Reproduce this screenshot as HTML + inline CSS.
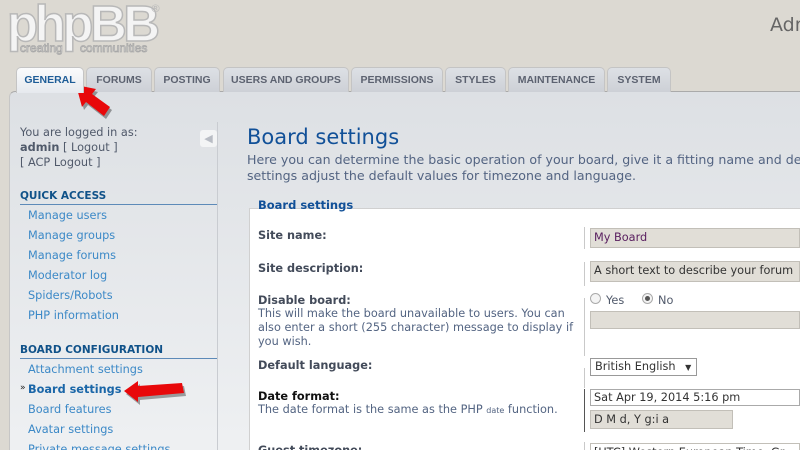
<!DOCTYPE html>
<html><head><meta charset="utf-8"><style>
*{margin:0;padding:0;box-sizing:border-box}
html,body{width:800px;height:450px;overflow:hidden}
body{background:#dcd9d2;font-family:"DejaVu Sans","Liberation Sans",sans-serif;position:relative}
.abs{position:absolute;white-space:nowrap}
.logo{left:7px;top:-6px;font:bold 51px "Liberation Sans",sans-serif;color:#f4f4f4;-webkit-text-stroke:1.5px #b8b8b8;letter-spacing:-3.5px}
.tag{left:20px;top:41px;font:12px "Liberation Sans",sans-serif;color:#f4f4f4;-webkit-text-stroke:0.8px #a8a8a8;word-spacing:14px}
.tab{position:absolute;top:67px;height:25px;background:linear-gradient(#dde0e5,#cdd0d6);border:1px solid #c4c4c4;border-bottom:none;border-radius:5px 5px 0 0;font:bold 10.5px "Liberation Sans",sans-serif;color:#5c6270;text-align:center;line-height:24px}
.tab.act{background:linear-gradient(#fafbfc,#e6e9ee);color:#1d5c97;height:26px;z-index:2}
.panel{position:absolute;left:9px;top:91px;width:791px;height:359px;background:linear-gradient(#dde0e4,#eef0f2 350px);border-top:1px solid #aaa;border-left:1px solid #c6c6c6;border-radius:6px 0 0 0}
.side{position:absolute;left:9px;top:122px;width:209px;height:328px;border-right:1px solid #c9ccd1}
.t{font-size:11.3px;color:#50596a}
.hd{font:bold 10.5px "DejaVu Sans",sans-serif;color:#105289;border-bottom:1px solid #5d8ab8;width:197px;padding-bottom:2px}
.lk{font-size:11.3px;color:#3c89c7;left:28px}
.lbl{font-weight:bold;font-size:11.3px;color:#434b5a;left:258px}
.inp{position:absolute;background:#e1ded7;border:1px solid #c2bfb8;font-size:11.3px;color:#333;padding-left:3px;line-height:17px;overflow:hidden;white-space:nowrap}
.vl{position:absolute;left:584px;width:1px;background:#c9c9c9}
</style></head><body>
<div class="abs logo">phpBB</div>
<div class="abs" style="left:150px;top:2px;font-size:11px;color:#bbb">®</div>
<div class="abs tag">creating communities</div>
<div class="abs" style="left:770px;top:14px;font:19px 'DejaVu Sans',sans-serif;color:#666">Adm</div>

<div class="panel"></div>
<div class="tab act" style="left:16px;width:68px">GENERAL</div>
<div class="tab" style="left:86px;width:66px">FORUMS</div>
<div class="tab" style="left:154px;width:66px">POSTING</div>
<div class="tab" style="left:223px;width:126px">USERS AND GROUPS</div>
<div class="tab" style="left:351px;width:92px">PERMISSIONS</div>
<div class="tab" style="left:445px;width:61px">STYLES</div>
<div class="tab" style="left:508px;width:97px">MAINTENANCE</div>
<div class="tab" style="left:607px;width:64px">SYSTEM</div>

<div class="side"></div>
<div class="abs" style="left:200px;top:130px;width:17px;height:17px;background:#f3f4f5;border-radius:3px;color:#b8bcc4;font-size:11px;text-align:center;line-height:17px">◀</div>
<div class="abs t" style="left:20px;top:126px">You are logged in as:</div>
<div class="abs t" style="left:20px;top:141px"><b>admin</b> [ Logout ]</div>
<div class="abs t" style="left:20px;top:156px">[ ACP Logout ]</div>
<div class="abs hd" style="left:20px;top:190px">QUICK ACCESS</div>
<div class="abs lk" style="top:209px">Manage users</div>
<div class="abs lk" style="top:229px">Manage groups</div>
<div class="abs lk" style="top:249px">Manage forums</div>
<div class="abs lk" style="top:269px">Moderator log</div>
<div class="abs lk" style="top:289px">Spiders/Robots</div>
<div class="abs lk" style="top:309px">PHP information</div>
<div class="abs hd" style="left:20px;top:344px">BOARD CONFIGURATION</div>
<div class="abs lk" style="top:363px">Attachment settings</div>
<div class="abs" style="left:20px;top:383px;font-size:9px;color:#222">»</div>
<div class="abs lk" style="top:383px;font-weight:bold;color:#1a66a8">Board settings</div>
<div class="abs lk" style="top:403px">Board features</div>
<div class="abs lk" style="top:423px">Avatar settings</div>
<div class="abs lk" style="top:443px">Private message settings</div>

<div class="abs" style="left:247px;top:125px;font-size:21px;color:#115098">Board settings</div>
<div class="abs" style="left:247px;top:152px;font-size:12.6px;color:#536482;line-height:16px">Here you can determine the basic operation of your board, give it a fitting name and description, and among other<br>settings adjust the default values for timezone and language.</div>

<div class="abs" style="left:249px;top:208px;width:551px;height:242px;background:#fff;border:1px solid #d0d0d0;border-right:none;border-bottom:none"></div>
<div class="abs" style="left:258px;top:198px;font-weight:bold;font-size:11.5px;color:#115098">Board settings</div>

<div class="vl" style="top:227px;height:22px"></div>
<div class="vl" style="top:262px;height:24px"></div>
<div class="vl" style="top:298px;height:58px"></div>
<div class="vl" style="top:368px;height:20px"></div>
<div class="vl" style="top:389px;height:43px;background:#555"></div>
<div class="vl" style="top:442px;height:8px"></div>

<div class="abs lbl" style="top:229px">Site name:</div>
<div class="inp" style="left:590px;top:228px;width:210px;height:20px;color:#5a2060">My Board</div>
<div class="abs lbl" style="top:262px">Site description:</div>
<div class="inp" style="left:590px;top:261px;width:210px;height:21px">A short text to describe your forum</div>
<div class="abs lbl" style="top:294px">Disable board:</div>
<div class="abs" style="left:258px;top:307px;font-size:11.3px;color:#536482;line-height:14px">This will make the board unavailable to users. You can<br>also enter a short (255 character) message to display if<br>you wish.</div>
<div class="abs" style="left:590px;top:293px;width:11px;height:11px;border:1px solid #aaa;border-radius:50%;background:#f4f4f4"></div>
<div class="abs t" style="left:606px;top:294px">Yes</div>
<div class="abs" style="left:642px;top:293px;width:11px;height:11px;border:1px solid #aaa;border-radius:50%;background:#f4f4f4"><div style="margin:2px;width:5px;height:5px;border-radius:50%;background:#555"></div></div>
<div class="abs t" style="left:658px;top:294px">No</div>
<div class="inp" style="left:590px;top:311px;width:210px;height:18px"></div>
<div class="abs lbl" style="top:359px">Default language:</div>
<div class="inp" style="left:590px;top:358px;width:107px;height:18px;background:#fff;border-color:#999;padding-left:4px;line-height:16px">British English <span style="font-size:8px;margin-left:6px">▼</span></div>
<div class="abs lbl" style="top:390px;color:#111">Date format:</div>
<div class="abs" style="left:258px;top:403px;font-size:11.3px;color:#536482">The date format is the same as the PHP <span style="font-size:8px">date</span> function.</div>
<div class="inp" style="left:590px;top:389px;width:210px;height:17px;background:#fff;border-color:#aaa;line-height:15px">Sat Apr 19, 2014 5:16 pm</div>
<div class="inp" style="left:590px;top:410px;width:143px;height:19px">D M d, Y g:i a</div>
<div class="abs lbl" style="top:444px">Guest timezone:</div>
<div class="inp" style="left:590px;top:443px;width:210px;height:19px;background:#fff">[UTC] Western European Time, Gr</div>

<svg class="abs" style="left:0;top:0" width="800" height="450">
<g transform="translate(2,3)" fill="#000" opacity=".35">
<path d="M76 85 L96 89 L92 94 L110 107 L104 116 L86 102 L82 107 Z"/>
<path d="M124 391 L138 381 L138 386 L182 383 L184 393 L138 397 L138 402 Z"/>
</g>
<path d="M76 85 L96 89 L92 94 L110 107 L104 116 L86 102 L82 107 Z" fill="#e8080a"/>
<path d="M124 391 L138 381 L138 386 L182 383 L184 393 L138 397 L138 402 Z" fill="#e8080a"/>
</svg>
</body></html>
